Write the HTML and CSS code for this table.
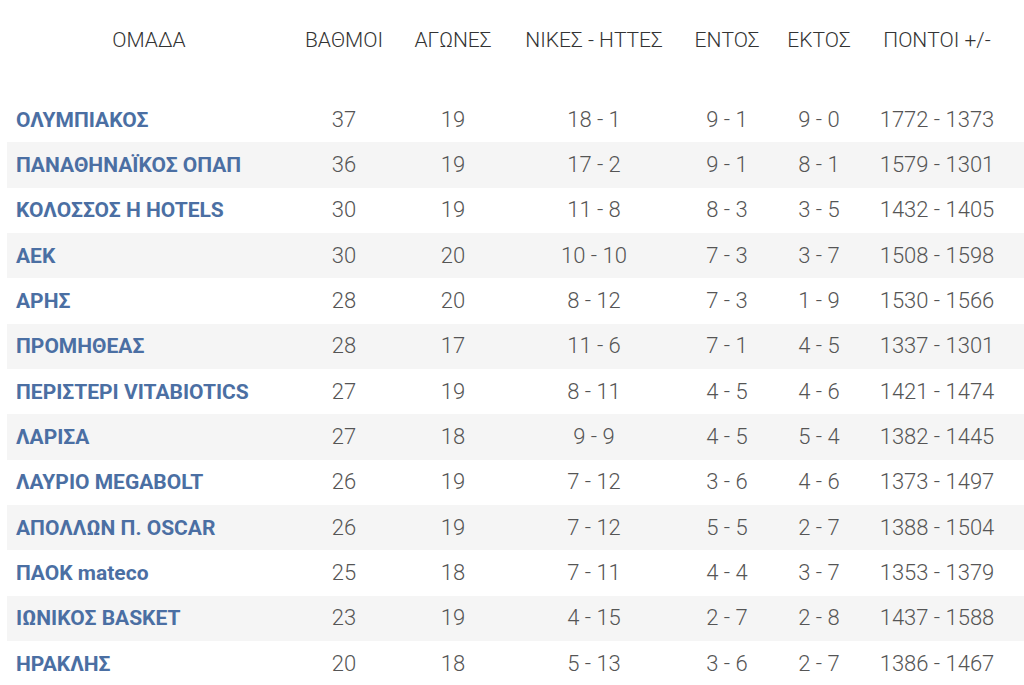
FILE: index.html
```html
<!DOCTYPE html>
<html lang="el">
<head>
<meta charset="utf-8">
<title>Βαθμολογία</title>
<link rel="stylesheet" href="styles.css">
</head>
<body>
<div class="wrap">
<table class="standings">
  <colgroup>
    <col class="c-team"><col class="c-pts"><col class="c-gp"><col class="c-wl"><col class="c-home"><col class="c-away"><col class="c-diff">
  </colgroup>
  <thead>
    <tr>
      <th>ΟΜΑΔΑ</th><th>ΒΑΘΜΟΙ</th><th>ΑΓΩΝΕΣ</th><th>ΝΙΚΕΣ - ΗΤΤΕΣ</th><th>ΕΝΤΟΣ</th><th>ΕΚΤΟΣ</th><th>ΠΟΝΤΟΙ +/-</th>
    </tr>
  </thead>
  <tbody>
    <tr><td class="team">ΟΛΥΜΠΙΑΚΟΣ</td><td>37</td><td>19</td><td>18 - 1</td><td>9 - 1</td><td>9 - 0</td><td>1772 - 1373</td></tr>
    <tr><td class="team">ΠΑΝΑΘΗΝΑΪΚΟΣ ΟΠΑΠ</td><td>36</td><td>19</td><td>17 - 2</td><td>9 - 1</td><td>8 - 1</td><td>1579 - 1301</td></tr>
    <tr><td class="team">ΚΟΛΟΣΣΟΣ H HOTELS</td><td>30</td><td>19</td><td>11 - 8</td><td>8 - 3</td><td>3 - 5</td><td>1432 - 1405</td></tr>
    <tr><td class="team">ΑΕΚ</td><td>30</td><td>20</td><td>10 - 10</td><td>7 - 3</td><td>3 - 7</td><td>1508 - 1598</td></tr>
    <tr><td class="team">ΑΡΗΣ</td><td>28</td><td>20</td><td>8 - 12</td><td>7 - 3</td><td>1 - 9</td><td>1530 - 1566</td></tr>
    <tr><td class="team">ΠΡΟΜΗΘΕΑΣ</td><td>28</td><td>17</td><td>11 - 6</td><td>7 - 1</td><td>4 - 5</td><td>1337 - 1301</td></tr>
    <tr><td class="team">ΠΕΡΙΣΤΕΡΙ VITABIOTICS</td><td>27</td><td>19</td><td>8 - 11</td><td>4 - 5</td><td>4 - 6</td><td>1421 - 1474</td></tr>
    <tr><td class="team">ΛΑΡΙΣΑ</td><td>27</td><td>18</td><td>9 - 9</td><td>4 - 5</td><td>5 - 4</td><td>1382 - 1445</td></tr>
    <tr><td class="team">ΛΑΥΡΙΟ MEGABOLT</td><td>26</td><td>19</td><td>7 - 12</td><td>3 - 6</td><td>4 - 6</td><td>1373 - 1497</td></tr>
    <tr><td class="team">ΑΠΟΛΛΩΝ Π. OSCAR</td><td>26</td><td>19</td><td>7 - 12</td><td>5 - 5</td><td>2 - 7</td><td>1388 - 1504</td></tr>
    <tr><td class="team">ΠΑΟΚ mateco</td><td>25</td><td>18</td><td>7 - 11</td><td>4 - 4</td><td>3 - 7</td><td>1353 - 1379</td></tr>
    <tr><td class="team">ΙΩΝΙΚΟΣ BASKET</td><td>23</td><td>19</td><td>4 - 15</td><td>2 - 7</td><td>2 - 8</td><td>1437 - 1588</td></tr>
    <tr><td class="team">ΗΡΑΚΛΗΣ</td><td>20</td><td>18</td><td>5 - 13</td><td>3 - 6</td><td>2 - 7</td><td>1386 - 1467</td></tr>
  </tbody>
</table>
</div>
</body>
</html>
```

FILE: styles.css
```css
html, body {
  margin: 0;
  padding: 0;
  background: #ffffff;
}

body {
  font-family: Roboto, "Noto Sans", "DejaVu Sans", sans-serif;
  overflow: hidden;
}

.wrap {
  padding-left: 7px;
}

.standings {
  width: 1017px;
  table-layout: fixed;
  border-collapse: collapse;
  border-spacing: 0;
}

.c-team { width: 284px; }
.c-pts { width: 106px; }
.c-gp { width: 112px; }
.c-wl { width: 170px; }
.c-home { width: 96px; }
.c-away { width: 88px; }
.c-diff { width: 161px; }

.standings th {
  box-sizing: border-box;
  height: 97px;
  padding: 28px 0 0;
  vertical-align: top;
  font-weight: 300;
  font-size: 21px;
  line-height: 24px;
  color: #333333;
  text-align: center;
  white-space: nowrap;
}

.standings th:last-child,
.standings td:last-child {
  padding-right: 13px;
}

.standings td {
  height: 45.33px;
  padding: 0;
  text-align: center;
  vertical-align: middle;
  font-weight: 300;
  font-size: 22px;
  line-height: 26px;
  color: #555555;
  white-space: nowrap;
}

.standings tbody tr:nth-child(even) {
  background: #f5f5f5;
}

.standings td.team {
  text-align: left;
  padding-left: 9px;
  font-weight: 700;
  font-size: 21px;
  color: #4b6fa3;
}
```
